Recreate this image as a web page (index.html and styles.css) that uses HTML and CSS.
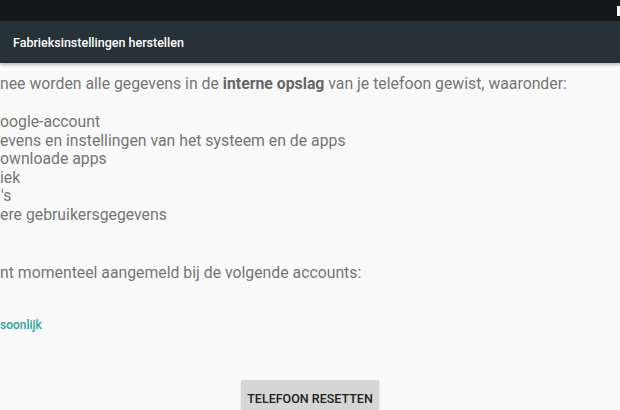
FILE: index.html
```html
<!DOCTYPE html>
<html lang="nl">
  <head>
    <meta charset="UTF-8">
    <meta name="viewport" content="width=device-width, initial-scale=1.0">
    <title>Fabrieksinstellingen herstellen</title>
    <link rel="stylesheet" href="styles.css">
  </head>
  <body>
    <div class="statusbar">
      <div class="battery"></div>
    </div>
    <div class="toolbar">
      <h1>Fabrieksinstellingen herstellen</h1>
    </div>
    <div class="content">
      <div class="text">
        <p class="intro">nee worden alle gegevens in de <b>interne opslag</b> van je telefoon gewist, waaronder:</p>
        <ul class="items">
          <li>oogle-account</li>
          <li>evens en instellingen van het systeem en de apps</li>
          <li>ownloade apps</li>
          <li>iek</li>
          <li class="quote">'s</li>
          <li>ere gebruikersgegevens</li>
        </ul>
        <p class="accounts">nt momenteel aangemeld bij de volgende accounts:</p>
        <div class="account">soonlijk</div>
      </div>
      <div class="actions">
        <button class="btn-reset">TELEFOON RESETTEN</button>
      </div>
    </div>
  </body>
</html>
```

FILE: styles.css
```css
*{
margin:0;
padding:0;
box-sizing:border-box;
}

body{
    background-color:#fafafa;
    font-family:Roboto, "Liberation Sans", sans-serif;
    width:620px;
    height:410px;
    overflow:hidden;
}

.statusbar{
    height:21px;
    background-color:#15181b;
    display:flex;
    justify-content:flex-end;
    align-items:flex-start;
}

.battery{
    width:3px;
    height:10px;
    margin-top:6px;
    background-color:#fff;
}

.toolbar{
    height:42px;
    background-color:#263238;
    display:flex;
    align-items:center;
    padding-left:13px;
    box-shadow:0 2px 3px rgba(0,0,0,.25);
    position:relative;
}

.toolbar h1{
    font-size:12.5px;
    font-weight:500;
    color:#fff;
    margin-top:1px;
}

.content{
    overflow:hidden;
}

.text{
    color:#757575;
    font-size:15.8px;
    white-space:nowrap;
}

.intro{
    margin-top:12px;
    line-height:18px;
}

.intro b{
    color:#666;
}

.items{
    list-style:none;
    margin-top:20px;
    line-height:18.5px;
}

.quote{
    padding-left:1px;
}

.accounts{
    margin-top:40px;
    line-height:18px;
}

.account{
    margin-top:36px;
    font-size:12px;
    font-weight:500;
    color:#26a69a;
}

.actions{
    display:flex;
    justify-content:center;
    margin-top:48px;
}

.btn-reset{
    background-color:#d6d6d6;
    color:#212121;
    border:none;
    border-radius:2px;
    font-family:Roboto, "Liberation Sans", sans-serif;
    font-size:12.5px;
    font-weight:500;
    height:36px;
    padding:0 6px;
    box-shadow:0 1px 2px rgba(0,0,0,.2);
}
```
